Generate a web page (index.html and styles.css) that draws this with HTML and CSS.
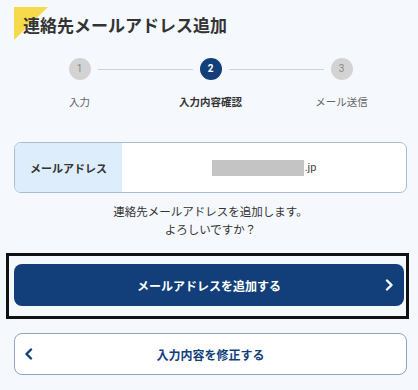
FILE: index.html
```html
<!DOCTYPE html>
<html lang="ja">
<head>
  <meta charset="UTF-8" />
  <meta name="viewport" content="width=device-width, initial-scale=1.0"/>
  <title>連絡先メールアドレス追加</title>
  <link rel="stylesheet" href="styles.css">
</head>
<body>

  <main class="page">
    <h1 class="page-title">連絡先メールアドレス追加</h1>

    <!-- Steps -->
    <ol class="steps">
      <li class="step done">
        <span class="step-num">1</span>
        <span class="step-label">入力</span>
      </li>
      <li class="step current">
        <span class="step-num">2</span>
        <span class="step-label">入力内容確認</span>
      </li>
      <li class="step">
        <span class="step-num">3</span>
        <span class="step-label">メール送信</span>
      </li>
    </ol>

    <div class="confirm-card">
      <div class="confirm-label">メールアドレス</div>
      <div class="confirm-value"><span class="masked"></span>.jp</div>
    </div>

    <p class="confirm-msg">連絡先メールアドレスを追加します。<br>よろしいですか？</p>

    <div class="focus-wrap">
      <button class="btn btn-primary">
        メールアドレスを追加する
        <svg class="chev chev-right" width="9" height="12" viewBox="0 0 9 12"><polyline points="2,1.5 6.5,6 2,10.5" fill="none" stroke="#fff" stroke-width="2.4" stroke-linecap="round" stroke-linejoin="round"/></svg>
      </button>
    </div>

    <button class="btn btn-secondary">
      <svg class="chev chev-left" width="9" height="12" viewBox="0 0 9 12"><polyline points="7,1.5 2.5,6 7,10.5" fill="none" stroke="#123f7a" stroke-width="2.4" stroke-linecap="round" stroke-linejoin="round"/></svg>
      入力内容を修正する
    </button>
  </main>

</body>
</html>
```

FILE: styles.css
```css
body {
  margin: 0;
  background-color: #f5f8fc;
  font-family: "Noto Sans CJK JP", "Noto Sans", sans-serif;
  color: #333;
}

.page {
  padding: 0 11px 10px 14px;
}

/* Title with yellow corner */
.page-title {
  position: relative;
  margin: 0;
  padding: 15px 0 0 9px;
  font-size: 17px;
  line-height: 20px;
  font-weight: bold;
  color: #333;
}

.page-title::before {
  content: "";
  position: absolute;
  top: 7px;
  left: 0;
  width: 34px;
  height: 33px;
  background: #f7d94c;
  clip-path: polygon(0 0, 100% 0, 0 100%);
  z-index: -1;
}

/* Steps */
.steps {
  list-style: none;
  margin: 23px 0 0;
  padding: 0;
  display: grid;
  grid-template-columns: repeat(3, 1fr);
}

.step {
  position: relative;
  display: flex;
  flex-direction: column;
  align-items: center;
  gap: 14px;
}

.step + .step::before {
  content: "";
  position: absolute;
  top: 11px;
  right: calc(50% + 18px);
  width: calc(100% - 36px);
  height: 1px;
  background: #cfd3d8;
}

.step-num {
  width: 22px;
  height: 22px;
  border-radius: 50%;
  background: #d3d3d3;
  color: #888;
  font-family: Roboto, sans-serif;
  font-size: 10px;
  line-height: 22px;
  text-align: center;
}

.step-label {
  font-size: 10.5px;
  line-height: 15px;
  color: #666;
}

.step.current .step-num {
  background: #123f7a;
  color: #fff;
  font-weight: bold;
}

.step.current .step-label {
  color: #333;
  font-weight: bold;
}

/* Confirm card */
.confirm-card {
  margin-top: 33px;
  display: flex;
  height: 49px;
  border: 1px solid #a8bdd3;
  border-radius: 7px;
  background: #fff;
  overflow: hidden;
}

.confirm-label {
  width: 107px;
  display: flex;
  align-items: center;
  justify-content: center;
  background: #ddedfb;
  font-size: 11px;
  font-weight: bold;
  color: #333;
}

.confirm-value {
  flex: 1;
  display: flex;
  align-items: center;
  justify-content: center;
  font-family: Roboto, sans-serif;
  font-size: 11px;
  color: #444;
}

.masked {
  display: inline-block;
  width: 92px;
  height: 16px;
  background: #c4c4c4;
  margin-right: 1px;
}

.confirm-msg {
  margin: 9px 0 0;
  text-align: center;
  font-size: 11.5px;
  line-height: 18px;
  color: #333;
}

/* Buttons */
.focus-wrap {
  margin: 15px -2px 0 -8px;
  padding: 8px 2px 10px 5px;
  border: 3px solid #111;
}

.btn {
  position: relative;
  display: flex;
  align-items: center;
  justify-content: center;
  width: 100%;
  border-radius: 8px;
  font-family: inherit;
  font-size: 12px;
  font-weight: bold;
  cursor: pointer;
}

.btn-primary {
  height: 42px;
  border: none;
  background: #123f7a;
  color: #fff;
}

.btn-secondary {
  margin-top: 14px;
  height: 42px;
  border: 1px solid #8ea6c2;
  background: #fff;
  color: #123f7a;
}

.chev {
  position: absolute;
  top: 50%;
  transform: translateY(-50%);
}

.chev-right {
  right: 10px;
}

.chev-left {
  left: 9px;
}
```
